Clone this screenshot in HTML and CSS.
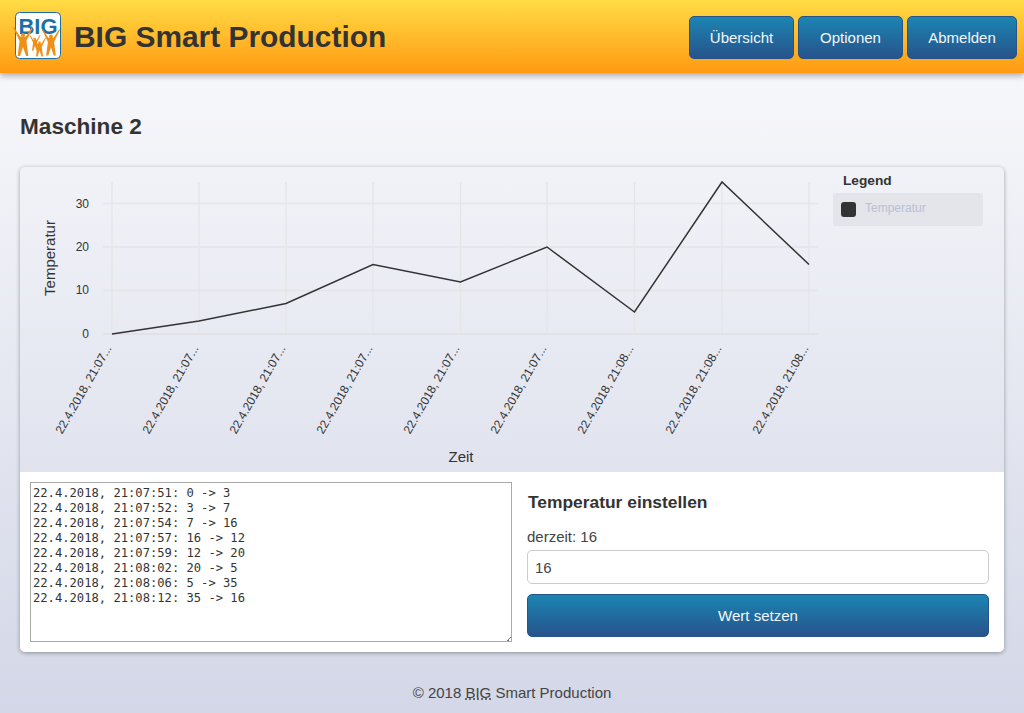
FILE: index.html
```html
<!DOCTYPE html>
<html lang="de">
<head>
    <meta charset="UTF-8">
    <meta name="viewport" content="width=device-width, initial-scale=1.0">
    <title>BIG Smart Production</title>
    <link rel="stylesheet" href="styles.css">
</head>
<body>
    <header class="top-bar">
        <div class="brand">
            <svg class="logo" width="50" height="50" viewBox="0 0 50 50">
                <defs>
                    <g id="person">
                        <circle cx="0" cy="-5" r="2.1"/>
                        <path d="M-9 -13L-3 -3.5L3 -3.5L9 -13L10 -12.4L3.4 1L4.2 7L5.4 16L3 16L0 7L-3 16L-5.4 16L-4.2 7L-3.4 1L-10 -12.4Z"/>
                    </g>
                </defs>
                <rect x="3.5" y="1.5" width="45" height="46" rx="4" fill="#fff" stroke="#1a6fa8" stroke-width="1"/>
                <text class="logo-text" x="26" y="23" text-anchor="middle">BIG</text>
                <g class="people">
                    <use href="#person" transform="translate(11 29)"/>
                    <use href="#person" transform="translate(23 31) scale(.55)"/>
                    <use href="#person" transform="translate(27.5 35) scale(.65)"/>
                    <use href="#person" transform="translate(39 30) scale(.9)"/>
                </g>
            </svg>
            <h1>BIG Smart Production</h1>
        </div>
        <nav class="nav">
            <button class="btn nav-btn">Übersicht</button>
            <button class="btn nav-btn">Optionen</button>
            <button class="btn nav-btn wide">Abmelden</button>
        </nav>
    </header>

    <main class="content">
        <h2>Maschine 2</h2>
        <section class="card">
            <div class="chart-row">
                <svg class="chart" width="813" height="305" viewBox="20 167 813 305">
                    <g class="grid">
                        <path d="M112 182V334M199 182V334M286 182V334M373 182V334M460.5 182V334M547 182V334M634.5 182V334M722 182V334M809 182V334"/>
                        <path d="M103 203.5H818M103 247H818M103 290.5H818"/>
                        <path class="zero" d="M103 334H818"/>
                    </g>
                    <g class="y-ticks">
                        <text x="89" y="208">30</text>
                        <text x="89" y="251">20</text>
                        <text x="89" y="294">10</text>
                        <text x="89" y="338">0</text>
                    </g>
                    <text class="axis-title" transform="translate(55 258) rotate(-90)">Temperatur</text>
                    <text class="axis-title" x="461" y="462">Zeit</text>
                    <polyline class="line" points="112,334 199,321 286,303.5 373,264.5 460.5,282 547,247 634.5,312 722,182 809,264.5"/>
                    <g class="x-ticks">
                        <text transform="translate(112 348) rotate(-60)">22.4.2018, 21:07...</text>
                        <text transform="translate(199 348) rotate(-60)">22.4.2018, 21:07...</text>
                        <text transform="translate(286 348) rotate(-60)">22.4.2018, 21:07...</text>
                        <text transform="translate(373 348) rotate(-60)">22.4.2018, 21:07...</text>
                        <text transform="translate(460 348) rotate(-60)">22.4.2018, 21:07...</text>
                        <text transform="translate(547 348) rotate(-60)">22.4.2018, 21:07...</text>
                        <text transform="translate(634 348) rotate(-60)">22.4.2018, 21:08...</text>
                        <text transform="translate(722 348) rotate(-60)">22.4.2018, 21:08...</text>
                        <text transform="translate(809 348) rotate(-60)">22.4.2018, 21:08...</text>
                    </g>
                </svg>
                <div class="legend">
                    <div class="legend-title">Legend</div>
                    <div class="legend-item">
                        <span class="swatch"></span>
                        <span class="legend-label">Temperatur</span>
                    </div>
                </div>
            </div>
            <div class="panel-row">
                <textarea class="log" readonly>22.4.2018, 21:07:51: 0 -&gt; 3
22.4.2018, 21:07:52: 3 -&gt; 7
22.4.2018, 21:07:54: 7 -&gt; 16
22.4.2018, 21:07:57: 16 -&gt; 12
22.4.2018, 21:07:59: 12 -&gt; 20
22.4.2018, 21:08:02: 20 -&gt; 5
22.4.2018, 21:08:06: 5 -&gt; 35
22.4.2018, 21:08:12: 35 -&gt; 16</textarea>
                <div class="setter">
                    <h3>Temperatur einstellen</h3>
                    <label class="current" for="temp">derzeit: 16</label>
                    <input class="temp-input" id="temp" type="text" value="16">
                    <button class="btn set-btn">Wert setzen</button>
                </div>
            </div>
        </section>
    </main>

    <footer class="footer">© 2018 <abbr title="BIG">BIG</abbr> Smart Production</footer>
</body>
</html>
```

FILE: styles.css
```css
* {
    box-sizing: border-box;
}

html, body {
    margin: 0;
    padding: 0;
}

body {
    font-family: "Liberation Sans", Arial, sans-serif;
    color: #333;
    height: 713px;
    overflow: hidden;
    background: linear-gradient(to bottom, #fbfbfd, #d3d7e7);
}

.top-bar {
    height: 73px;
    padding: 16px 7px 0 14px;
    display: flex;
    justify-content: space-between;
    background: linear-gradient(to bottom, #ffdc45, #ff9a12);
    box-shadow: 0 3px 6px rgba(0, 0, 0, 0.3);
}

.brand {
    display: flex;
    align-items: flex-start;
    margin-top: -6px;
}

.logo {
    flex: none;
    margin-top: 1px;
    margin-left: -2px;
}

.logo-text {
    font-size: 22px;
    font-weight: bold;
    fill: #1a6fa8;
}

.people {
    fill: #ee8f18;
}

.brand h1 {
    margin: 6px 0 0 12px;
    font-size: 29.9px;
    line-height: 42px;
    font-weight: bold;
    color: #333;
}

.nav {
    display: flex;
    gap: 4px;
    height: 43px;
}

.btn {
    font-family: inherit;
    color: #f3f6fa;
    background: linear-gradient(to bottom, #1b85b2, #27538b);
    border: 1px solid #27538b;
    border-radius: 5px;
    cursor: pointer;
}

.nav-btn {
    width: 105px;
    font-size: 15px;
    padding: 0;
}

.nav-btn.wide {
    width: 110px;
}

.content {
    padding: 0 20px;
}

.content h2 {
    margin: 0;
    padding-top: 39px;
    height: 94px;
    font-size: 22.6px;
    line-height: 30px;
    font-weight: bold;
}

.card {
    border-radius: 5px;
    box-shadow: 0 1px 4px rgba(0, 0, 0, 0.35);
    overflow: hidden;
}

.chart-row {
    display: flex;
    height: 305px;
}

.chart {
    flex: none;
    display: block;
}

.grid path {
    fill: none;
    stroke: #e5e5e8;
    stroke-width: 1.4;
}

.grid .zero {
    stroke: #dfdfe3;
    stroke-width: 1.6;
}

.y-ticks text {
    font-size: 12px;
    fill: #333;
    text-anchor: end;
}

.axis-title {
    font-size: 15px;
    fill: #333;
    text-anchor: middle;
}

.x-ticks text {
    font-size: 12px;
    fill: #333;
    text-anchor: end;
}

.line {
    fill: none;
    stroke: #333;
    stroke-width: 1.5;
}

.legend {
    width: 150px;
}

.legend-title {
    padding: 1px 0 0 10px;
    height: 26px;
    font-size: 13.7px;
    line-height: 26px;
    font-weight: bold;
}

.legend-item {
    height: 33px;
    padding: 0 0 0 8px;
    display: flex;
    align-items: center;
    gap: 9px;
    background: #e4e5ea;
    border-radius: 2px;
}

.swatch {
    width: 15px;
    height: 15px;
    background: #333;
    border-radius: 3px;
}

.legend-label {
    margin-top: -3px;
    font-size: 12px;
    color: #b8c0d4;
}

.panel-row {
    display: flex;
    gap: 15px;
    height: 180px;
    padding: 10px 15px 0 10px;
    background: #fff;
}

.log {
    flex: none;
    width: 482px;
    height: 160px;
    margin: 0;
    padding: 3px 2px;
    font-family: "DejaVu Sans Mono", monospace;
    font-size: 12.15px;
    line-height: 15px;
    color: #333;
    border: 1px solid #a9a9a9;
    outline: none;
}

.log::-webkit-resizer {
    background: linear-gradient(135deg, transparent 84%, #777 84%, #777 90%, transparent 90%);
}

.setter {
    flex: 1;
    display: flex;
    flex-direction: column;
}

.setter h3 {
    margin: 0 0 0 1px;
    padding-top: 9px;
    height: 43px;
    font-size: 17.4px;
    line-height: 22px;
    font-weight: bold;
}

.current {
    height: 15px;
    padding-top: 2px;
    font-size: 15px;
    line-height: 20px;
    color: #444;
}

.temp-input {
    margin-top: 10px;
    height: 34px;
    padding: 0 7px;
    font-family: inherit;
    font-size: 15px;
    color: #444;
    border: 1px solid #ccc;
    border-radius: 5px;
    outline: none;
}

.set-btn {
    margin-top: 10px;
    height: 43px;
    font-size: 15px;
}

.footer {
    padding-top: 32px;
    text-align: center;
    font-size: 15px;
    line-height: 18px;
    color: #444;
}

.footer abbr {
    text-decoration: underline dotted;
}
```
